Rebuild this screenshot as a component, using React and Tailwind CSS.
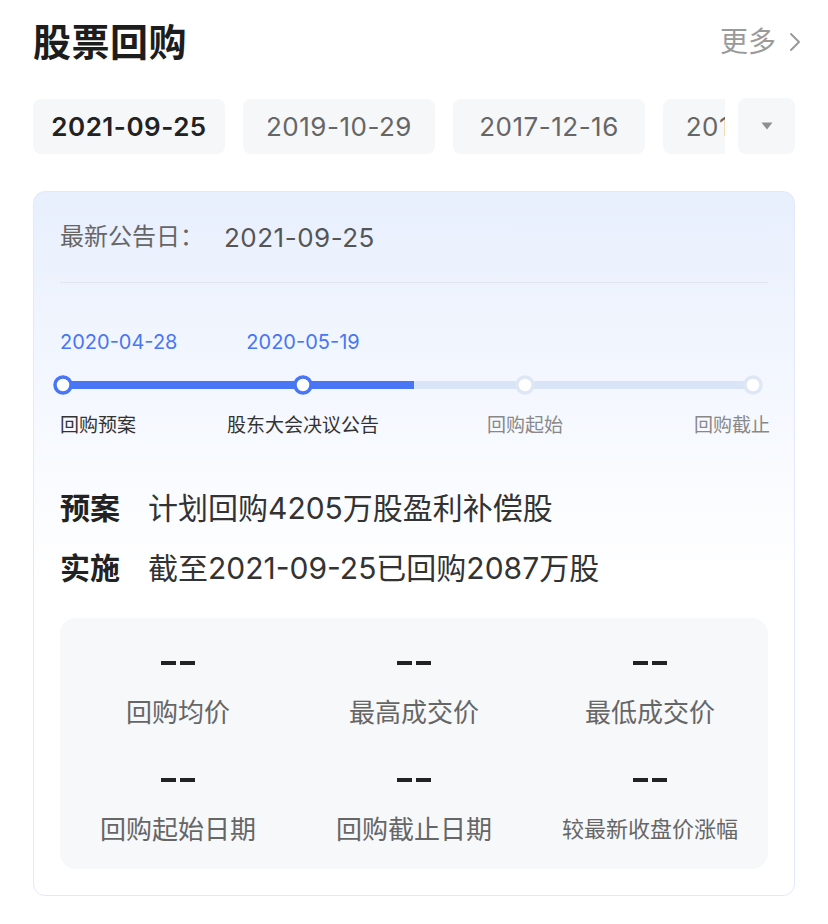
import React from "react";

const tabs = ["2021-09-25", "2019-10-29", "2017-12-16", "2016-08-31"];

function Track() {
  const blue = "#4876f4";
  return (
    <svg width="724" height="22" viewBox="0 0 724 22" className="block -ml-[7px]">
      <rect x="10" y="7" width="690" height="8" fill="#d9e4f6" />
      <rect x="10" y="7" width="351" height="8" fill={blue} />
      <circle cx="10" cy="11" r="8" fill="#fff" stroke={blue} strokeWidth="3.5" />
      <circle cx="250" cy="11" r="8" fill="#fff" stroke={blue} strokeWidth="3.5" />
      <circle cx="472" cy="11" r="8" fill="#fff" stroke="#dfe7f6" strokeWidth="3.5" />
      <circle cx="700" cy="11" r="8" fill="#fff" stroke="#dfe7f6" strokeWidth="3.5" />
    </svg>
  );
}

function Stat({ label, small }) {
  return (
    <div className="flex flex-col items-center">
      <div className="h-[30px] flex items-center justify-center gap-[4px]">
        <span className="block w-[15px] h-[3.5px] bg-[#222]" />
        <span className="block w-[15px] h-[3.5px] bg-[#222]" />
      </div>
      <div
        className={
          "mt-[17px] h-[34px] flex items-center text-[#666] whitespace-nowrap " +
          (small ? "text-[22px]" : "text-[26px]")
        }
      >
        {label}
      </div>
    </div>
  );
}

export default function App() {
  return (
    <div className="w-[828px] h-[924px] bg-white px-[33px] font-['Inter','Noto_Sans_CJK_SC',sans-serif] text-[#222]">
      {/* title row */}
      <div className="h-[84px] flex items-center justify-between">
        <div className="text-[38px] font-bold leading-none tracking-[0.5px] text-[#1d1d1d]">股票回购</div>
        <div className="flex items-center gap-[13px] -mr-[6px] text-[28px] text-[#9a9a9a] leading-none">
          <span>更多</span>
          <svg width="12" height="22" viewBox="0 0 12 22" fill="none">
            <path d="M2 3 L10 11 L2 19" stroke="#9a9a9a" strokeWidth="2" strokeLinecap="round" strokeLinejoin="round" />
          </svg>
        </div>
      </div>

      {/* tabs */}
      <div className="mt-[14px] flex items-center">
        <div className="w-[692px] overflow-hidden">
          <div className="flex gap-[18px] w-max">
            {tabs.map((t, i) => (
              <div
                key={t}
                className={
                  "w-[192px] h-[55px] rounded-[8px] bg-[#f6f7f9] flex items-center justify-center text-[26px] tracking-[0.5px] " +
                  (i === 0 ? "font-semibold text-[#222]" : "text-[#666]")
                }
              >
                {t}
              </div>
            ))}
          </div>
        </div>
        <div className="ml-[13px] w-[57px] h-[56px] rounded-[8px] bg-[#f6f7f9] flex items-center justify-center">
          <svg width="12" height="8" viewBox="0 0 12 8">
            <path d="M0.5 0.5 H11.5 L6 7.5 Z" fill="#8f8f8f" />
          </svg>
        </div>
      </div>

      {/* card */}
      <div className="mt-[37px] rounded-[12px] border border-[#e1e9fa] bg-linear-to-b from-[#e8effd] to-white to-55% px-[26px] pb-[26px]">
        <div className="h-[91px] flex items-center border-b border-[#e1e5ee] text-[24px] text-[#666]">
          <span>最新公告日：</span>
          <span className="ml-[20px] text-[26px] tracking-[0.5px] text-[#555]">2021-09-25</span>
        </div>

        {/* timeline */}
        <div className="mt-[47px] w-[710px]">
          <div className="flex h-[24px] items-center text-[20px] text-[#4876f4]">
            <div className="w-[143px]">2020-04-28</div>
            <div className="w-[200px] text-center">2020-05-19</div>
          </div>
          <div className="mt-[20px]">
            <Track />
          </div>
          <div className="mt-[18px] flex h-[24px] items-center text-[19px] whitespace-nowrap">
            <div className="w-[143px] text-[#333]">回购预案</div>
            <div className="w-[200px] text-center text-[#333]">股东大会决议公告</div>
            <div className="ml-[22px] w-[200px] text-center text-[#888]">回购起始</div>
            <div className="flex-1 text-right text-[#888]">回购截止</div>
          </div>
        </div>

        {/* summary rows */}
        <div className="mt-[50px] flex flex-col gap-[20px]">
          <div className="h-[40px] flex items-center text-[30px]">
            <span className="font-bold text-[#222] w-[88px]">预案</span>
            <span className="text-[#333]">计划回购4205万股盈利补偿股</span>
          </div>
          <div className="h-[40px] flex items-center text-[30px]">
            <span className="font-bold text-[#222] w-[88px]">实施</span>
            <span className="text-[#333]">截至2021-09-25已回购2087万股</span>
          </div>
        </div>

        {/* stats */}
        <div className="mt-[30px] rounded-[16px] bg-[#f7f8fa] pt-[30px] pb-[23px] grid grid-cols-3 gap-y-[36px]">
          <Stat label="回购均价" />
          <Stat label="最高成交价" />
          <Stat label="最低成交价" />
          <Stat label="回购起始日期" />
          <Stat label="回购截止日期" />
          <Stat label="较最新收盘价涨幅" small />
        </div>
      </div>
    </div>
  );
}
